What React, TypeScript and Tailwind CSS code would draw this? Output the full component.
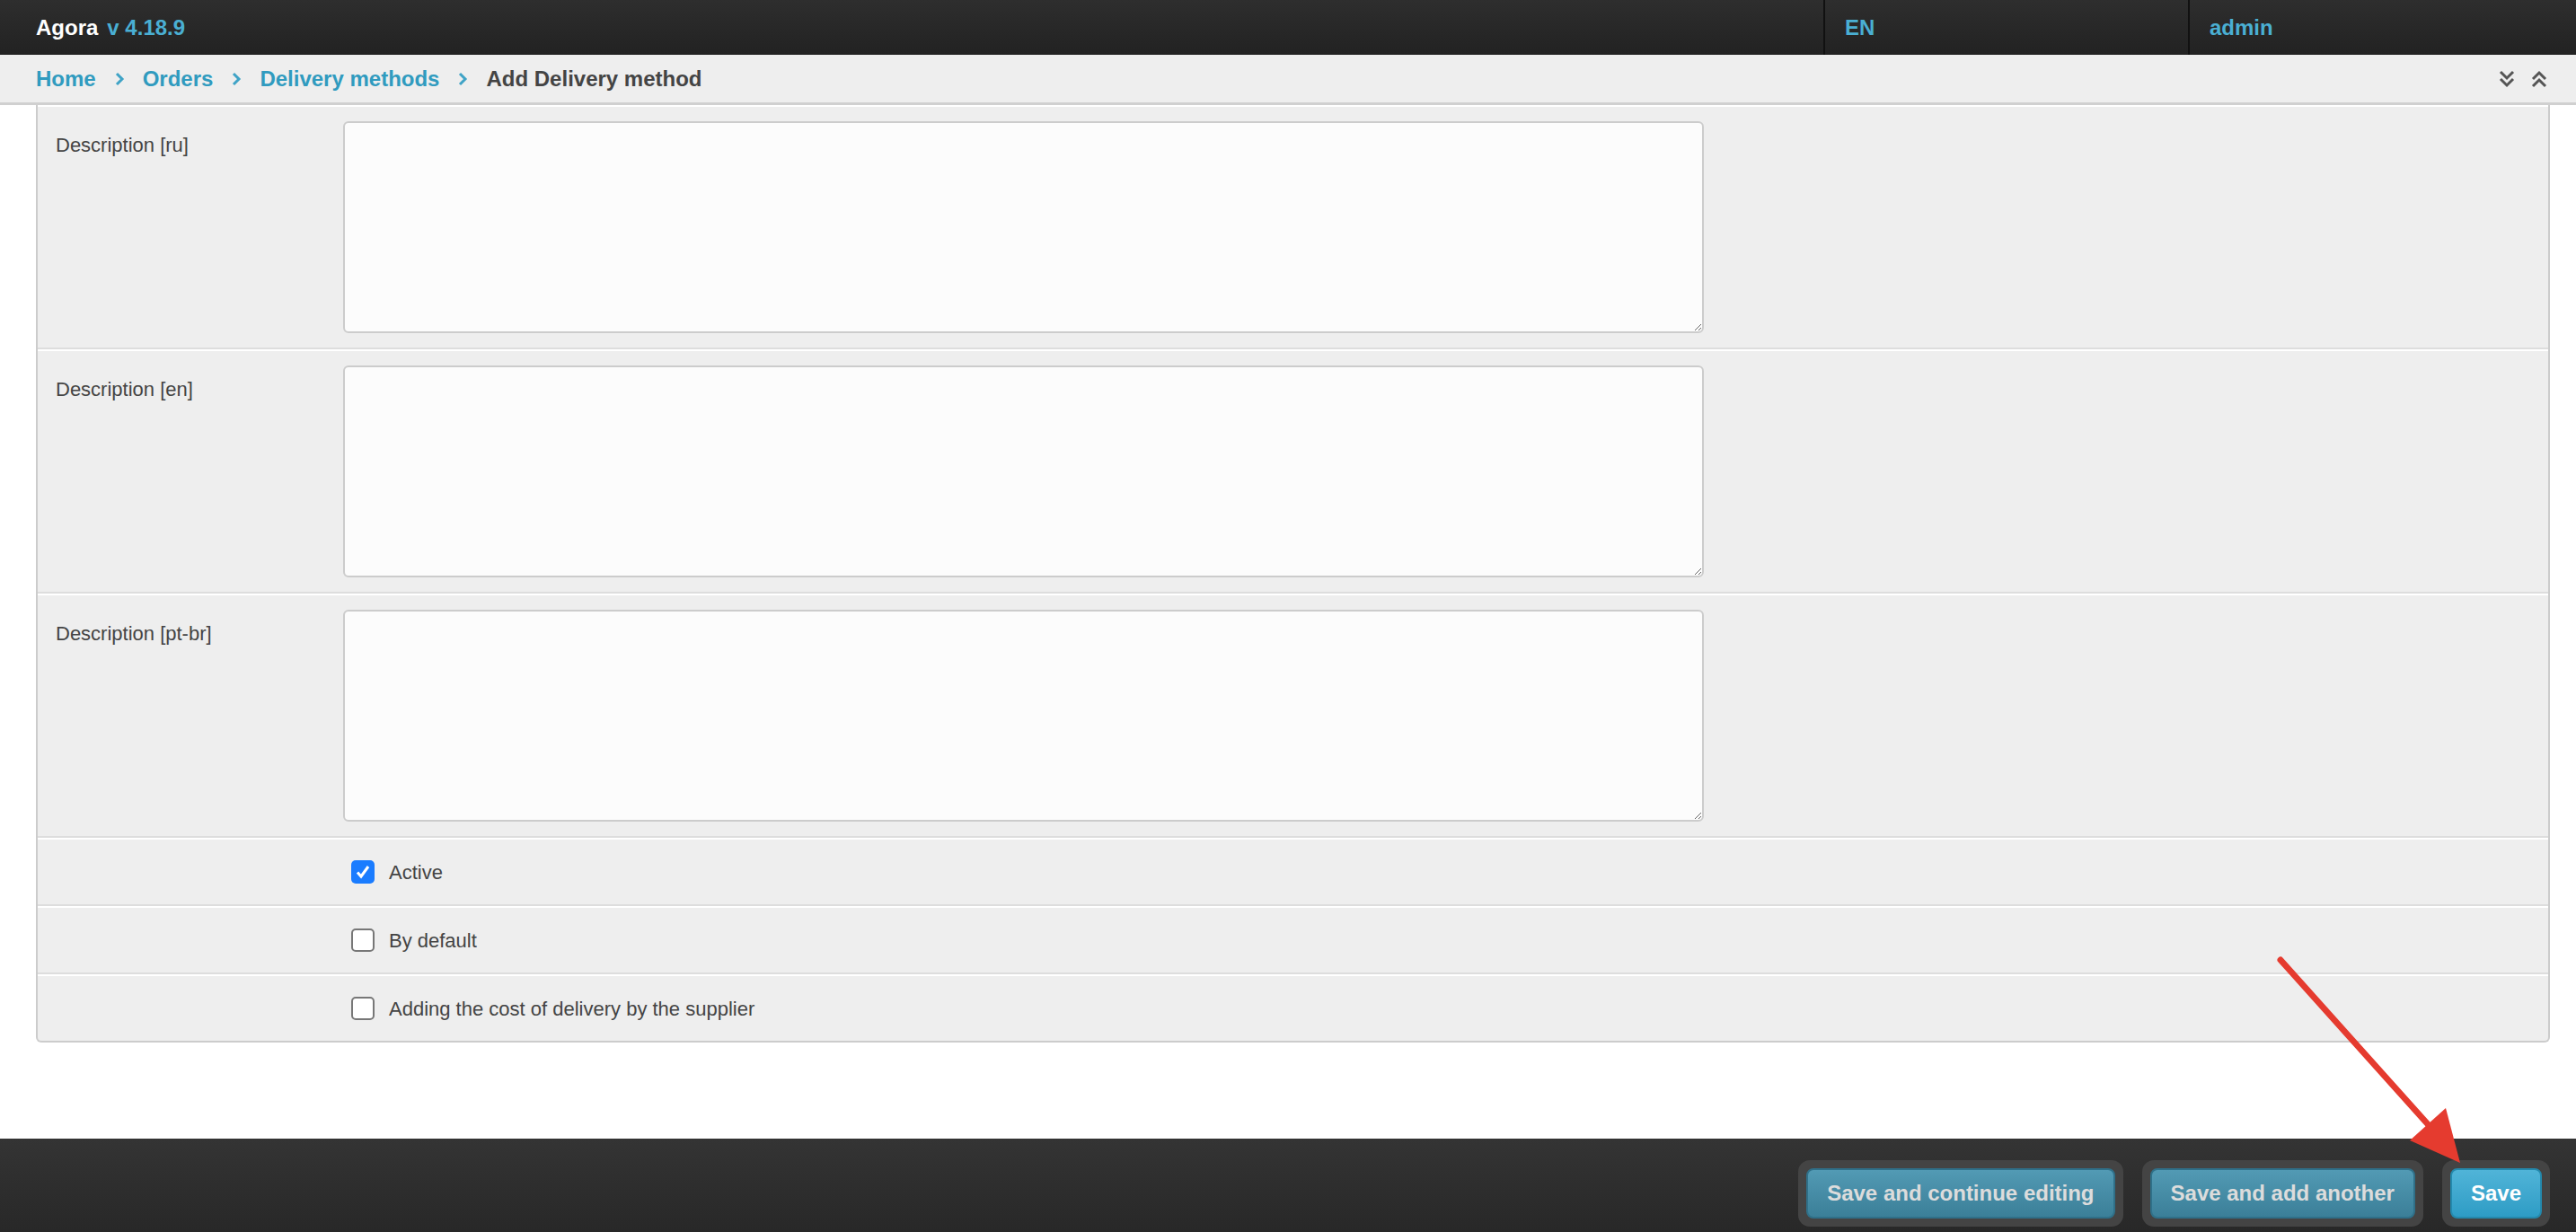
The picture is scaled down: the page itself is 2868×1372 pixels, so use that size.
import React from "react";

const descriptions = ["Description [ru]", "Description [en]", "Description [pt-br]"];

const flags = [
	{ label: "Active", checked: true },
	{ label: "By default", checked: false },
	{ label: "Adding the cost of delivery by the supplier", checked: false },
];

function Crumb() {
	return (
		<svg width="12" height="18" viewBox="0 0 12 18" className="mx-[20px]">
			<path d="M3 3 L9 9 L3 15" fill="none" stroke="#3fa3c6" strokeWidth="3" />
		</svg>
	);
}

function Box({ checked }: { checked: boolean }) {
	if (checked) {
		return (
			<span className="w-[26px] h-[26px] rounded-[5px] bg-[#1a7cff] flex items-center justify-center">
				<svg width="18" height="18" viewBox="0 0 18 18">
					<path d="M3 9.5 L7 14 L15 3" fill="none" stroke="white" strokeWidth="3" />
				</svg>
			</span>
		);
	}
	return <span className="w-[26px] h-[26px] rounded-[5px] bg-white border-2 border-[#777]" />;
}

function TextRow({ label }: { label: string }) {
	return (
		<div className="flex border-t-2 border-t-white border-b-2 border-b-[#ddd] py-[16px]">
			<div className="w-[340px] pl-[20px] pt-[14px] text-[22px] leading-[26px] text-[#444]">{label}</div>
			<textarea className="w-[1515px] h-[236px] bg-[#fcfcfc] border-2 border-[#ccc] rounded-[6px] outline-none" />
		</div>
	);
}

function CheckRow({ label, checked, last }: { label: string; checked: boolean; last?: boolean }) {
	return (
		<div
			className={
				last
					? "flex items-center h-[74px] border-t-2 border-t-white"
					: "flex items-center h-[76px] border-t-2 border-t-white border-b-2 border-b-[#ddd]"
			}>
			<div className="w-[349px]" />
			<Box checked={checked} />
			<span className="ml-[16px] text-[22px] text-[#444]">{label}</span>
		</div>
	);
}

function FooterButton({ label, primary }: { label: string; primary?: boolean }) {
	return (
		<div className="bg-[#444] rounded-[13px] p-[9px]">
			<div
				className={
					primary
						? "h-[56px] px-[21px] flex items-center rounded-[8px] border-2 border-[#2489ad] bg-gradient-to-b from-[#50b4d8] to-[#2d9cc5] text-white"
						: "h-[56px] px-[21px] flex items-center rounded-[8px] border-2 border-[#2f7089] bg-gradient-to-b from-[#529ab4] to-[#3b7f98] text-[#dcdcdc]"
				}>
				{label}
			</div>
		</div>
	);
}

export default function App() {
	return (
		<div className="relative h-[1372px] flex flex-col bg-white overflow-hidden font-['Liberation_Sans',Arial,sans-serif]">
			<header className="h-[61px] flex bg-gradient-to-b from-[#2e2e2e] to-[#222] text-[24px] font-bold">
				<div className="flex-1 flex items-center pl-[40px]">
					<span className="text-white">Agora</span>
					<span className="ml-[10px] text-[#4aafd3]">v 4.18.9</span>
				</div>
				<div className="w-[406px] border-l-2 border-[#111] flex items-center pl-[22px] text-[#4aafd3]">EN</div>
				<div className="w-[432px] border-l-2 border-[#111] flex items-center pl-[22px] text-[#4aafd3]">admin</div>
			</header>

			<nav className="h-[56px] bg-[#eee] border-b-[3px] border-[#d0d0d0] flex items-center pl-[40px] pr-[30px] text-[24px] font-bold">
				<a className="text-[#309bbf]">Home</a>
				<Crumb />
				<a className="text-[#309bbf]">Orders</a>
				<Crumb />
				<a className="text-[#309bbf]">Delivery methods</a>
				<Crumb />
				<span className="text-[#444]">Add Delivery method</span>
				<div className="ml-auto flex items-center gap-[14px]">
					<svg width="22" height="22" viewBox="0 0 22 22">
						<path d="M4 3 L11 10 L18 3 M4 11 L11 18 L18 11" fill="none" stroke="#555" strokeWidth="3" />
					</svg>
					<svg width="22" height="22" viewBox="0 0 22 22">
						<path d="M4 11 L11 4 L18 11 M4 19 L11 12 L18 19" fill="none" stroke="#555" strokeWidth="3" />
					</svg>
				</div>
			</nav>

			<section className="ml-[40px] mr-[29px] bg-[#eee] border-x-2 border-b-2 border-[#ccc] rounded-b-[6px]">
				{descriptions.map((d) => (
					<TextRow key={d} label={d} />
				))}
				{flags.map((f, i) => (
					<CheckRow key={f.label} label={f.label} checked={f.checked} last={i === flags.length - 1} />
				))}
			</section>

			<footer className="mt-auto h-[104px] bg-gradient-to-b from-[#343434] to-[#282828] flex items-end justify-end gap-[21px] pr-[29px] pb-[6px] text-[24px] font-bold">
				<FooterButton label="Save and continue editing" />
				<FooterButton label="Save and add another" />
				<FooterButton label="Save" primary />
			</footer>

			<svg className="absolute inset-0 pointer-events-none" width="2868" height="1372">
				<line x1="2539" y1="1069" x2="2712" y2="1262" stroke="#e53b2f" strokeWidth="7" strokeLinecap="round" />
				<polygon points="2739,1295 2683,1270 2723,1234" fill="#e53b2f" />
			</svg>
		</div>
	);
}
